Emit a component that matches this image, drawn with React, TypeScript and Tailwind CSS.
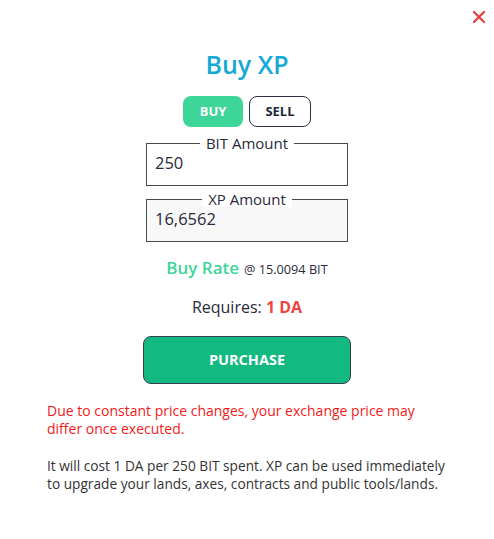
import React, { useState } from 'react';

const font = { fontFamily: '"Open Sans", "Liberation Sans", sans-serif' };

const BuyXp: React.FC = () => {
  const [mode, setMode] = useState<'buy' | 'sell'>('buy');
  const [bit, setBit] = useState('250');

  return (
    <div className="relative w-[494px] h-[539px] bg-white text-[#2a2a3a]" style={font}>
      {/* close */}
      <button className="absolute right-[3px] top-[5px] p-1 text-[#e53e3e]" aria-label="Close">
        <svg width="16" height="16" viewBox="0 0 16 16" fill="none" stroke="currentColor" strokeWidth="2.2" strokeLinecap="round">
          <path d="M3 3l10 10M13 3L3 13" />
        </svg>
      </button>

      <div className="flex flex-col items-center pt-[46px]">
        <h2 className="text-[25px] leading-[36px] font-semibold text-[#17a9d6]">Buy XP</h2>

        {/* Buy / Sell toggle */}
        <div className="flex gap-[6px] mt-[14px]">
          <button
            onClick={() => setMode('buy')}
            className={`w-[60px] h-[31px] rounded-[8px] text-[13px] font-bold ${
              mode === 'buy' ? 'bg-[#3dd598] text-white' : 'bg-white text-[#1f2937] border border-[#2d3340]'
            }`}
          >
            BUY
          </button>
          <button
            onClick={() => setMode('sell')}
            className={`w-[62px] h-[31px] rounded-[8px] text-[13px] font-bold ${
              mode === 'sell' ? 'bg-[#3dd598] text-white' : 'bg-white text-[#1f2937] border border-[#2d3340]'
            }`}
          >
            SELL
          </button>
        </div>

        {/* BIT Amount */}
        <fieldset className="mt-[9px] w-[202px] h-[50px] border border-[#4a4a4a] px-[8px] pb-[4px]">
          <legend className="mx-auto px-[6px] text-[15px] leading-[15px] text-[#2a2a3a]">BIT Amount</legend>
          <input
            value={bit}
            onChange={(e) => setBit(e.target.value)}
            className="w-full -mt-[1px] bg-transparent outline-none text-[16.5px] leading-[24px] text-[#2a2a3a]"
            style={font}
          />
        </fieldset>

        {/* XP Amount */}
        <fieldset className="mt-[6px] w-[202px] h-[50px] border border-[#4a4a4a] bg-[#f8f8f8] px-[8px] pb-[4px]">
          <legend className="mx-auto px-[6px] bg-white text-[15px] leading-[15px] text-[#2a2a3a]">XP Amount</legend>
          <input
            value="16,6562"
            disabled
            className="w-full bg-transparent outline-none text-[16.5px] leading-[22px] text-[#2a2a3a]"
            style={font}
          />
        </fieldset>

        <div className="mt-[13px] flex items-baseline gap-[5px]">
          <span className="text-[17px] font-semibold text-[#3dd598]">Buy Rate</span>
          <span className="text-[12.7px] text-[#2a2a3a]">@ 15.0094 BIT</span>
        </div>

        <div className="mt-[14px] text-[16px]">
          Requires: <span className="font-bold text-[#ef4444]">1 DA</span>
        </div>

        <button className="mt-[17px] w-[208px] h-[48px] rounded-[8px] bg-[#12b981] border border-[#334050] text-white text-[14.5px] font-bold">
          PURCHASE
        </button>
      </div>

      <div className="px-[47px] mt-[18px] text-[13.7px] leading-[18px]">
        <p className="w-[375px] text-[14px] text-[#f21b1b]">
          Due to constant price changes, your exchange price may differ once executed.
        </p>
        <p className="mt-[19px] w-[400px] text-[#333]">
          It will cost 1 DA per 250 BIT spent. XP can be used immediately to upgrade your lands, axes, contracts and public tools/lands.
        </p>
      </div>
    </div>
  );
};

export default function App() {
  return <BuyXp />;
}
